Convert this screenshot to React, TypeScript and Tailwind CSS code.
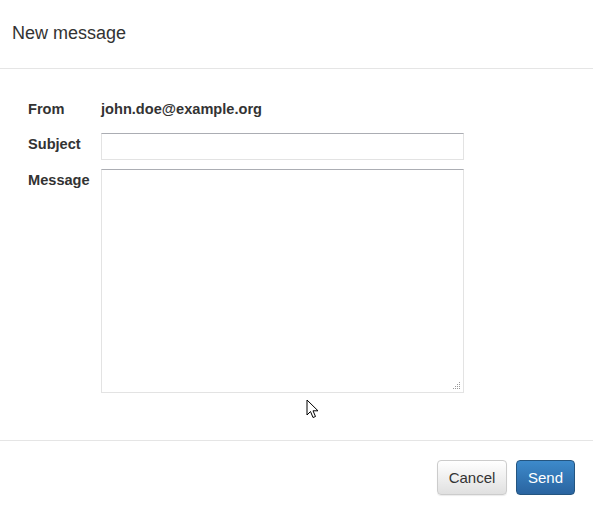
const font = { fontFamily: '"Liberation Sans", Arial, sans-serif' };

const Cursor = () => (
  <svg className="absolute left-[306px] top-[399px]" width="14" height="21" viewBox="0 0 14 21">
    <path d="M1 1 L1 16 L4.5 12.5 L7 18.5 L9.5 17.5 L7 11.8 L12 11.8 Z" fill="#fff" stroke="#000" strokeWidth="1" strokeLinejoin="miter" />
  </svg>
);

const Grip = () => (
  <svg className="absolute right-[2px] bottom-[2px]" width="8" height="8" viewBox="0 0 8 8">
    {[
      [6, 0],
      [4, 2],
      [6, 2],
      [2, 4],
      [4, 4],
      [6, 4],
      [0, 6],
      [2, 6],
      [4, 6],
      [6, 6],
    ].map(([x, y]) => (
      <rect key={`${x}-${y}`} x={x} y={y} width="1" height="1" fill="#9a9a9a" />
    ))}
  </svg>
);

const App = () => {
  return (
    <div className="relative w-[593px] h-[511px] bg-white text-[#333] text-sm" style={font}>
      <div className="h-[69px] border-b border-[#e5e5e5] flex items-center px-3">
        <h4 className="text-[18px] text-[#333] leading-none pb-[2px]">New message</h4>
      </div>

      <div className="pl-[28px] pt-[30px] h-[371px] text-[14.6px]">
        <div className="flex h-[20px] items-center">
          <span className="w-[73px] font-bold">From</span>
          <span className="font-bold">john.doe@example.org</span>
        </div>
        <div className="flex mt-[14px]">
          <label className="w-[73px] font-bold pt-[1px]">Subject</label>
          <input
            type="text"
            className="w-[363px] h-[27px] border border-[#e3e3e3] border-t-[#abadb3] bg-white outline-none px-2"
          />
        </div>
        <div className="flex mt-[9px]">
          <label className="w-[73px] font-bold pt-[1px]">Message</label>
          <div className="relative w-[363px] h-[224px] border border-[#e3e3e3] border-t-[#abadb3] bg-white">
            <Grip />
          </div>
        </div>
      </div>

      <div className="border-t border-[#e5e5e5] flex justify-end gap-[9px] pt-[19px] pr-[18px]">
        <button className="h-[35px] w-[70px] rounded-[4px] border border-[#ccc] bg-gradient-to-b from-white to-[#e0e0e0] text-[#333] text-[15px] shadow-[0_1px_1px_rgba(0,0,0,0.08)]">
          Cancel
        </button>
        <button className="h-[35px] w-[59px] rounded-[4px] border border-[#245580] bg-gradient-to-b from-[#3d8acb] to-[#2a64a0] text-white text-[15px]">
          Send
        </button>
      </div>

      <Cursor />
    </div>
  );
};

export default App;
